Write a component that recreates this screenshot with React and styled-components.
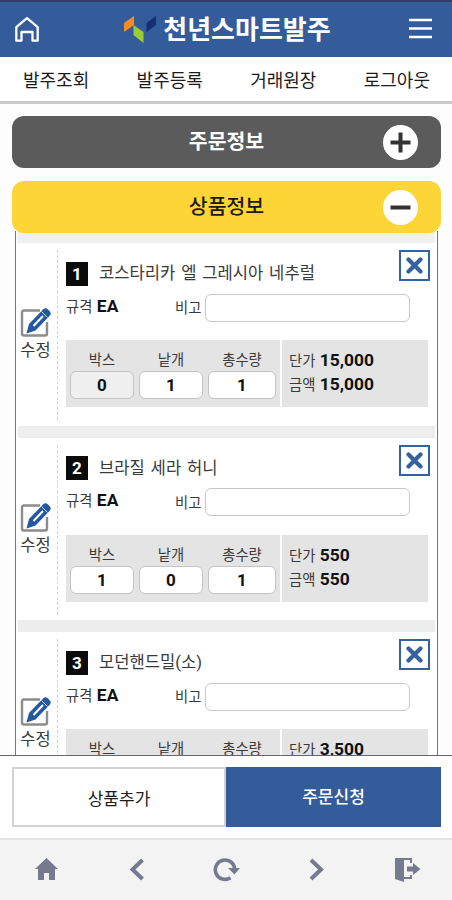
import React, { Component } from 'react'

import styled, { createGlobalStyle } from 'styled-components'

const GlobalStyle = createGlobalStyle`
    * {
        box-sizing: border-box;
    }

    body {
        margin: 0;
        background: #fdfdfd;
        color: #3a3a3a;
        font-family: Roboto, 'Noto Sans CJK KR', sans-serif;
    }

    button {
        padding: 0;
        border: 0;
        background: none;
        color: inherit;
        font: inherit;
    }

    svg {
        display: block;
    }
`

const Screen = styled.div`
    display: flex;
    flex-direction: column;
    width: 452px;
    height: 900px;
    overflow: hidden;
`

const Header = styled.header`
    display: flex;
    align-items: center;
    justify-content: space-between;
    flex: none;
    height: 57px;
    padding: 0 20px 0 15px;
    border-top: 2px solid #2f3c69;
    background: #345c9b;
`

const Brand = styled.h1`
    display: flex;
    align-items: center;
    gap: 6px;
    margin: 0;
    padding-left: 6px;
    color: #fff;
    font-size: 26px;
    font-weight: 700;
    line-height: 36px;
    white-space: nowrap;
`

const Nav = styled.nav`
    display: flex;
    justify-content: space-between;
    align-items: center;
    flex: none;
    height: 47px;
    padding: 3px 22px 0 23px;
    border-bottom: 3px solid #cbcbcb;
    background: #fff;
    font-size: 18px;
    line-height: 26px;
`

const NavLink = styled.a`
    color: #1c1c1c;
    white-space: nowrap;
`

const Content = styled.main`
    display: flex;
    flex-direction: column;
    flex: none;
    height: 652px;
    padding: 12px 11px 0 12px;
    overflow: hidden;
    border-bottom: 1px solid #666;
`

const SectionBar = styled.div`
    display: grid;
    grid-template-columns: 1fr auto 1fr;
    align-items: center;
    flex: none;
    z-index: 1;
    height: 52px;
    margin-bottom: ${props => (props.$open ? -2 : 13)}px;
    padding: 0 23px;
    border-radius: 12px;
    background: ${props => (props.$open ? '#fdd537' : '#5b5b5b')};
    color: ${props => (props.$open ? '#1d1a0c' : '#fff')};
    font-size: 20.5px;
    font-weight: ${props => (props.$open ? 500 : 700)};
    line-height: 30px;
`

const SectionTitle = styled.span`
    grid-column: 2;
    white-space: nowrap;
`

const RoundButton = styled.button`
    display: flex;
    align-items: center;
    justify-content: center;
    justify-self: end;
    width: 35px;
    height: 35px;
    border-radius: 50%;
    background: #fff;
`

const List = styled.div`
    flex: none;
    margin: 0 3px;
    padding: 0 2px;
    border-left: 1px solid #777;
    border-right: 1px solid #777;
    background: #fff;
`

const Item = styled.article`
    display: flex;
    height: 194.5px;
    padding: 7px 7px 0 0;
    border-bottom: 12px solid #ededed;

    &:first-child {
        height: 206.5px;
        border-top: 12px solid #f0f0f0;
    }
`

const EditColumn = styled.div`
    display: flex;
    flex-direction: column;
    align-items: center;
    width: 40px;
    height: 170px;
    padding: 57px 4px 0 0;
    border-right: 1px dashed #d2d2d2;
    font-size: 16.5px;
    line-height: 25px;
    white-space: nowrap;
`

const ItemBody = styled.div`
    flex: 1;
    padding-left: 8px;
`

const TitleRow = styled.div`
    display: flex;
    align-items: flex-start;
    height: 44px;
`

const Num = styled.span`
    width: 22px;
    height: 24px;
    margin: 11.5px 11px 0 0;
    background: #0b0b0b;
    color: #fff;
    font-size: 17px;
    font-weight: 700;
    line-height: 24px;
    text-align: center;
`

const Name = styled.span`
    flex: 1;
    margin-top: 11px;
    font-size: 16.6px;
    line-height: 25px;
    word-spacing: 1.7px;
    white-space: nowrap;
`

const DeleteButton = styled.button`
    display: flex;
    align-items: center;
    justify-content: center;
    width: 31px;
    height: 31px;
    margin-right: -2px;
    border: 2px solid #34619f;
    background: #fff;
`

const SpecRow = styled.div`
    display: flex;
    align-items: center;
    height: 27px;
    font-size: 14.3px;
`

const Spec = styled.span`
    width: 109px;
    padding-bottom: 3px;
    line-height: 22px;
`

const NoteLabel = styled.span`
    padding-bottom: 2px;
`

const Strong = styled.b`
    margin-left: 1px;
    color: #111;
    font-size: 17.4px;
    font-weight: 700;
`

const NoteInput = styled.input`
    width: 205px;
    height: 28px;
    margin-left: 4px;
    border: 1px solid #c9c9c9;
    border-radius: 6px;
    background: #fff;
`

const Amounts = styled.div`
    display: flex;
    gap: 2px;
    height: 67px;
    margin-top: 19px;
`

const Quantities = styled.div`
    display: flex;
    gap: 5px;
    width: 214px;
    padding: 9px 4px 0;
    background: #e4e4e4;
`

const Quantity = styled.label`
    display: flex;
    flex-direction: column;
    align-items: center;
    width: ${props => (props.$wide ? 68 : 64)}px;
    font-size: 14.3px;
    line-height: 22px;
`

const QuantityInput = styled.input`
    width: 100%;
    height: 28px;
    padding: 0;
    border: 1px solid #c4c4c4;
    border-radius: 6px;
    background: ${props => (props.disabled ? '#efefef' : '#fff')};
    color: #111;
    font-family: Roboto, sans-serif;
    font-size: 17px;
    font-weight: 700;
    text-align: center;
`

const Prices = styled.div`
    flex: 1;
    padding: 9px 0 0 7px;
    background: #e4e4e4;
    font-size: 14.3px;
    line-height: 23px;
    white-space: nowrap;
`

const Actions = styled.div`
    display: grid;
    grid-template-columns: 214px 215px;
    flex: none;
    height: 82px;
    padding: 11px 0 11px 12px;
    background: #fff;
`

const ActionButton = styled.button`
    border: ${props => (props.$primary ? 0 : '2px solid #d0d2d3')};
    background: ${props => (props.$primary ? '#345c9b' : '#fff')};
    color: ${props => (props.$primary ? '#fff' : '#1c1c1c')};
    font-size: 17px;
    font-weight: ${props => (props.$primary ? 500 : 400)};
    line-height: 24px;
    padding-top: ${props => (props.$primary ? 0 : 4)}px;
`

const TabBar = styled.footer`
    display: flex;
    justify-content: space-between;
    flex: 1;
    padding: 16px 31px 0 33px;
    border-top: 2px solid #e2e2e2;
    background: #f3f3f3;
    color: #77798f;
`

const HomeOutline = () => (
    <svg width="24" height="26" viewBox="0 0 24 26" fill="none" stroke="#fff" strokeWidth="2.3">
        <path d="M1.3 23.7V10.1L12 1.2l10.7 8.9v13.6h-5.2V15H6.5v8.7z" strokeLinejoin="round" />
    </svg>
)

const Logo = () => (
    <svg width="34" height="28" viewBox="0 0 34 28">
        <path d="M1 7 11 0v9L1 16z" fill="#f58b1f" />
        <path d="M10.5 9 20.5 16v11L10.5 19z" fill="#99cc35" />
        <path d="M23.5 7 33 0v9l-9.5 7z" fill="#13316f" />
    </svg>
)

const MenuIcon = () => (
    <svg width="23" height="23" viewBox="0 0 23 23" stroke="#fff" strokeWidth="2.6">
        <path d="M0 2h23M0 10.5h23M0 19h23" />
    </svg>
)

const SignIcon = ({ plus }) => (
    <svg width="21" height="21" viewBox="0 0 21 21" stroke="#333" strokeWidth="4">
        <path d={plus ? 'M.5 10.5h20M10.5.5v20' : 'M.5 10.5h20'} />
    </svg>
)

const EditIcon = () => (
    <svg width="32" height="31" viewBox="0 0 32 31">
        <path
            d="M20 3.5H4Q2 3.5 2 5.500v21q0 2 2 2h21q2 0 2-2V15"
            fill="none"
            stroke="#8c8c8c"
            strokeWidth="2.400"
        />
        <path d="M6.500 26.500 9 17 23 2.500q2.500-2.500 5 0L29.500 4q2.500 2.500 0 5L15.500 23.500z" fill="#2458a0" />
        <path d="M13.500 19 23 9" stroke="#fff" strokeWidth="2" />
        <path d="m21.500 4.500 6 6" stroke="#fff" strokeWidth=".8" />
    </svg>
)

const CrossIcon = () => (
    <svg width="17" height="17" viewBox="0 0 17 17" stroke="#34619f" strokeWidth="4.2">
        <path d="m2.5 2.5 12 12M14.5 2.5l-12 12" strokeLinecap="round" />
    </svg>
)

const TabIcon = ({ children }) => (
    <svg width="28" height="28" viewBox="0 0 28 28" fill="currentColor">
        {children}
    </svg>
)

const items = [
    { name: '코스타리카 엘 그레시아 네추럴', box: '0', piece: '1', total: '1', price: '15,000', noBox: true },
    { name: '브라질 세라 허니', box: '1', piece: '0', total: '1', price: '550' },
    { name: '모던핸드밀(소)', box: '0', piece: '1', total: '1', price: '3,500' },
]

const OrderItem = ({ item, index }) => (
    <Item>
        <EditColumn>
            <EditIcon />
            수정
        </EditColumn>
        <ItemBody>
            <TitleRow>
                <Num>{index + 1}</Num>
                <Name>{item.name}</Name>
                <DeleteButton>
                    <CrossIcon />
                </DeleteButton>
            </TitleRow>
            <SpecRow>
                <Spec>
                    규격 <Strong>EA</Strong>
                </Spec>
                <NoteLabel>비고</NoteLabel>
                <NoteInput type="text" />
            </SpecRow>
            <Amounts>
                <Quantities>
                    <Quantity>
                        박스
                        <QuantityInput defaultValue={item.box} disabled={item.noBox} />
                    </Quantity>
                    <Quantity>
                        낱개
                        <QuantityInput defaultValue={item.piece} />
                    </Quantity>
                    <Quantity $wide>
                        총수량
                        <QuantityInput defaultValue={item.total} />
                    </Quantity>
                </Quantities>
                <Prices>
                    <div>
                        단가 <Strong>{item.price}</Strong>
                    </div>
                    <div>
                        금액 <Strong>{item.price}</Strong>
                    </div>
                </Prices>
            </Amounts>
        </ItemBody>
    </Item>
)

class App extends Component {
    render() {
        return (
            <Screen>
                <GlobalStyle />
                <Header>
                    <HomeOutline />
                    <Brand>
                        <Logo />
                        천년스마트발주
                    </Brand>
                    <MenuIcon />
                </Header>
                <Nav>
                    <NavLink>발주조회</NavLink>
                    <NavLink>발주등록</NavLink>
                    <NavLink>거래원장</NavLink>
                    <NavLink>로그아웃</NavLink>
                </Nav>
                <Content>
                    <SectionBar>
                        <SectionTitle>주문정보</SectionTitle>
                        <RoundButton>
                            <SignIcon plus />
                        </RoundButton>
                    </SectionBar>
                    <SectionBar $open>
                        <SectionTitle>상품정보</SectionTitle>
                        <RoundButton>
                            <SignIcon />
                        </RoundButton>
                    </SectionBar>
                    <List>
                        {items.map((item, index) => (
                            <OrderItem key={item.name} item={item} index={index} />
                        ))}
                    </List>
                </Content>
                <Actions>
                    <ActionButton>상품추가</ActionButton>
                    <ActionButton $primary>주문신청</ActionButton>
                </Actions>
                <TabBar>
                    <TabIcon>
                        <path d="M13.5 2 25 13h-3v11h-6v-7h-5v7H5V13H2z" />
                    </TabIcon>
                    <TabIcon>
                        <path d="M19.5 4 9.5 13.5l10 9.5" fill="none" stroke="currentColor" strokeWidth="4" />
                    </TabIcon>
                    <TabIcon>
                        <path
                            d="M17.5 21.7A9.7 9.7 0 1 1 21.7 13"
                            fill="none"
                            stroke="currentColor"
                            strokeWidth="3.6"
                        />
                        <path d="M15 12h12l-5.500 6.500z" />
                    </TabIcon>
                    <TabIcon>
                        <path d="m8 4 10 9.5L8 23" fill="none" stroke="currentColor" strokeWidth="4" />
                    </TabIcon>
                    <TabIcon>
                        <path d="M2 2h17v5h-2V4h-6v17h6v-2h2v4h-8v3l-9-3z" />
                        <path d="M14 10.500h6V7l7.500 6-7.500 6v-3.500h-6z" />
                    </TabIcon>
                </TabBar>
            </Screen>
        )
    }
}

export default App
